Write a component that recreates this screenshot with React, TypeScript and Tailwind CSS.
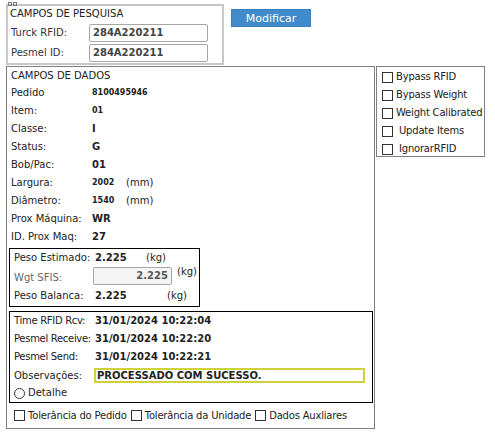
import React from 'react';

const Box = () => (
  <span className="inline-block h-[11px] w-[11px] shrink-0 border border-[#333] bg-white" />
);

const dataRows: Array<{ label: string; value: string; small?: boolean; unit?: string }> = [
  { label: 'Pedido', value: '8100495946', small: true },
  { label: 'Item:', value: '01', small: true },
  { label: 'Classe:', value: 'I' },
  { label: 'Status:', value: 'G' },
  { label: 'Bob/Pac:', value: '01' },
  { label: 'Largura:', value: '2002', small: true, unit: '(mm)' },
  { label: 'Diâmetro:', value: '1540', small: true, unit: '(mm)' },
  { label: 'Prox Máquina:', value: 'WR' },
  { label: 'ID. Prox Maq:', value: '27' },
];

const times = [
  { label: 'Time RFID Rcv:', value: '31/01/2024 10:22:04' },
  { label: 'Pesmel Receive:', value: '31/01/2024 10:22:20' },
  { label: 'Pesmel Send:', value: '31/01/2024 10:22:21' },
];

const options = [
  { label: 'Bypass RFID', gap: 'gap-[3px]' },
  { label: 'Bypass Weight', gap: 'gap-[3px]' },
  { label: 'Weight Calibrated', gap: 'gap-[3px]' },
  { label: 'Update Items', gap: 'gap-[6px]' },
  { label: 'IgnorarRFID', gap: 'gap-[6px]' },
];

export default function App() {
  return (
    <div className="relative h-[434px] w-[495px] whitespace-nowrap bg-white text-[10px] leading-none text-[#222] font-['DejaVu_Sans',Verdana,sans-serif]">
      {/* broken image marker */}
      <div className="absolute left-[8px] top-[2px] flex gap-[1px]">
        <span className="h-[4px] w-[4px] border border-[#777]" />
        <span className="h-[4px] w-[4px] border border-[#777]" />
      </div>

      <div className="flex items-start pl-[6px] pt-[4px]">
        <div className="h-[61px] w-[218px] border-2 border-[#c6c6c6] pl-[2px]">
          <div className="flex h-[18px] items-center pb-[2px]">CAMPOS DE PESQUISA</div>
          <div className="flex h-[18px] items-center pl-[1px]">
            <span className="w-[78px] text-[#333]">Turck RFID:</span>
            <div className="flex h-[18px] w-[119px] items-center rounded-[2px] border border-[#a6a6a6] pl-[3px] text-[10px] font-bold text-[#444]">
              284A220211
            </div>
          </div>
          <div className="mt-[2px] flex h-[18px] items-center pl-[1px]">
            <span className="w-[78px] text-[#333]">Pesmel ID:</span>
            <div className="flex h-[18px] w-[119px] items-center rounded-[2px] border border-[#a6a6a6] pl-[3px] text-[10px] font-bold text-[#444]">
              284A220211
            </div>
          </div>
        </div>
        <button className="ml-[7px] mt-[5px] flex h-[18px] w-[80px] items-center justify-center border border-[#3a7fc0] bg-[#428bca] text-[11px] text-white">
          Modificar
        </button>
      </div>

      <div className="flex items-start pl-[6px] pt-[1px]">
        <div className="h-[363px] w-[369px] border border-[#808080]">
          <div className="flex h-[16px] items-center pl-[4px] pt-[1px]">CAMPOS DE DADOS</div>
          <div className="pl-[4px] pt-[1px]">
            {dataRows.map((r) => (
              <div key={r.label} className="flex h-[18px] items-center">
                <span className="w-[81px] shrink-0">{r.label}</span>
                <span className={r.small ? 'w-[34px] text-[8px] font-bold' : 'w-[34px] text-[10px] font-bold'}>
                  {r.value}
                </span>
                {r.unit && <span>{r.unit}</span>}
              </div>
            ))}
          </div>

          <div className="ml-[2px] mt-[2px] h-[59px] w-[191px] border border-black pl-[4px]">
            <div className="flex h-[16px] items-center pt-[1px]">
              <span className="w-[81px] shrink-0">Peso Estimado:</span>
              <span className="w-[51px] font-bold">2.225</span>
              <span>(kg)</span>
            </div>
            <div className="flex h-[22px] items-start">
              <span className="mt-[8px] w-[79px] shrink-0 text-[#666]">Wgt SFIS:</span>
              <div className="mt-[2px] flex h-[18px] w-[79px] items-center justify-end rounded-[2px] border border-[#a6a6a6] bg-[#f5f5f5] pr-[3px] font-bold text-[#555]">
                2.225
              </div>
              <span className="ml-[5px] mt-[2px]">(kg)</span>
            </div>
            <div className="flex h-[16px] items-center pt-[1px]">
              <span className="w-[81px] shrink-0">Peso Balanca:</span>
              <span className="w-[72px] font-bold">2.225</span>
              <span>(kg)</span>
            </div>
          </div>

          <div className="ml-[2px] mt-[4px] h-[92px] w-[364px] border border-black pl-[4px]">
            {times.map((t) => (
              <div key={t.label} className="flex h-[18px] items-center">
                <span className="w-[81px] shrink-0 tracking-[-0.3px]">{t.label}</span>
                <span className="font-bold">{t.value}</span>
              </div>
            ))}
            <div className="flex h-[19px] items-center">
              <span className="w-[80px] shrink-0">Observações:</span>
              <div className="flex h-[15px] w-[271px] items-center border-2 border-[#d0d03c] pl-[1px] font-bold">
                PROCESSADO COM SUCESSO.
              </div>
            </div>
            <div className="flex h-[16px] items-center gap-[3px]">
              <span className="mt-[1px] inline-block h-[11px] w-[11px] rounded-full border border-[#333] bg-white" />
              <span>Detalhe</span>
            </div>
          </div>

          <div className="flex h-[23px] items-center pl-[7px] pt-[2px] tracking-[-0.2px]">
            <Box />
            <span className="ml-[3px]">Tolerância do Pedido</span>
            <span className="ml-[4px]" />
            <Box />
            <span className="ml-[3px]">Tolerância da Unidade</span>
            <span className="ml-[4px]" />
            <Box />
            <span className="ml-[3px]">Dados Auxliares</span>
          </div>
        </div>

        <div className="ml-[1px] h-[91px] w-[109px] border border-[#808080] pl-[5px] pt-[1px] tracking-[-0.2px]">
          {options.map((o) => (
            <div key={o.label} className={`flex h-[18px] items-center ${o.gap}`}>
              <Box />
              <span>{o.label}</span>
            </div>
          ))}
        </div>
      </div>
    </div>
  );
}
